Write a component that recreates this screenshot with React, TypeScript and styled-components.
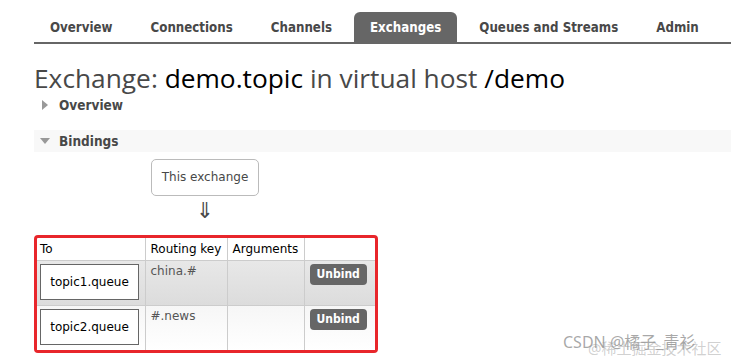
import React from 'react'
import styled, { createGlobalStyle } from 'styled-components'

const GlobalStyle = createGlobalStyle`
  html, body {
    margin: 0;
    padding: 0;
    background: #fff;
  }
  body {
    font-family: "DejaVu Sans", Verdana, sans-serif;
    font-size: 12px;
    color: #484848;
  }
`;

const tabs = ['Overview', 'Connections', 'Channels', 'Exchanges', 'Queues and Streams', 'Admin'];

const bindings = [
  { queue: 'topic1.queue', key: 'china.#', dark: true },
  { queue: 'topic2.queue', key: '#.news', dark: false },
];

const App = () => {
  return (
    <>
      <GlobalStyle />
      <Page>
        <Nav>
          {tabs.map(t => (
            <Tab key={t} $active={t === 'Exchanges'}>{t}</Tab>
          ))}
        </Nav>

        <Title>
          Exchange: <b>demo.topic</b> in virtual host <b>/demo</b>
        </Title>

        <Section>
          <Toggle>
            <Caret $open={false} />
            Overview
          </Toggle>
        </Section>

        <Section>
          <Toggle $bar>
            <Caret $open />
            Bindings
          </Toggle>
          <Diagram>
            <Source>This exchange</Source>
            <Arrow>⇓</Arrow>
          </Diagram>
          <Highlight>
            <Table>
              <thead>
                <tr>
                  <Th $w={108}>To</Th>
                  <Th $w={82}>Routing key</Th>
                  <Th $w={77}>Arguments</Th>
                  <Th $w={71}></Th>
                </tr>
              </thead>
              <tbody>
                {bindings.map(b => (
                  <Row key={b.queue} $dark={b.dark}>
                    <Td><QueueBox>{b.queue}</QueueBox></Td>
                    <Td>{b.key}</Td>
                    <Td></Td>
                    <Td><Unbind>Unbind</Unbind></Td>
                  </Row>
                ))}
              </tbody>
            </Table>
          </Highlight>
        </Section>
        <Watermark>CSDN @橘子_青衫</Watermark>
        <Watermark $second>@稀土掘金技术社区</Watermark>
      </Page>
    </>
  )
}

const Page = styled.div`
  position: relative;
  height: 361px;
  padding: 12px 0 0 34px;
  box-sizing: border-box;
  overflow: hidden;
`;

const Nav = styled.ul`
  display: flex;
  margin: 0;
  padding: 0;
  list-style: none;
  border-bottom: 2px solid #666;
  height: 30px;
`;

const Tab = styled.li<{ $active?: boolean }>`
  display: flex;
  align-items: center;
  padding: 0 16px;
  margin-right: 6px;
  font-family: "DejaVu Sans Condensed", "DejaVu Sans", sans-serif;
  font-stretch: condensed;
  font-weight: bold;
  font-size: 13.2px;
  color: ${p => (p.$active ? '#fff' : '#484848')};
  background: ${p => (p.$active ? '#666' : 'transparent')};
  border-radius: 6px 6px 0 0;
`;

const Title = styled.h1`
  margin: 19px 0 0;
  font-family: "Open Sans", sans-serif;
  font-weight: normal;
  font-size: 26.3px;
  line-height: 31px;
  color: #484848;
  b {
    font-weight: normal;
    color: #000;
  }
`;

const Section = styled.div`
  & + & {
    margin-top: 14px;
  }
`;

const Toggle = styled.div<{ $bar?: boolean }>`
  display: flex;
  align-items: center;
  height: 22px;
  padding-left: 6px;
  font-weight: bold;
  font-size: 13.5px;
  font-family: "DejaVu Sans Condensed", "DejaVu Sans", sans-serif;
  font-stretch: condensed;
  color: #484848;
  background: ${p => (p.$bar ? '#f8f8f8' : 'transparent')};
`;

const Caret = styled.span<{ $open?: boolean }>`
  display: inline-block;
  width: 0;
  height: 0;
  margin-right: 9px;
  ${p =>
    p.$open
      ? `border-left: 5px solid transparent;
         border-right: 5px solid transparent;
         border-top: 6px solid #999;`
      : `border-top: 5px solid transparent;
         border-bottom: 5px solid transparent;
         border-left: 6px solid #999;
         margin-left: 2px;
         margin-right: 11px;`}
`;

const Diagram = styled.div`
  display: flex;
  flex-direction: column;
  align-items: center;
  width: 108px;
  margin: 7px 0 0 117px;
`;

const Source = styled.div`
  border: 1px solid #bbb;
  border-radius: 5px;
  padding: 0 10px;
  height: 35px;
  line-height: 35px;
  white-space: nowrap;
  color: #484848;
`;

const Arrow = styled.div`
  font-size: 22px;
  line-height: 29px;
  color: #484848;
`;

const Highlight = styled.div`
  display: inline-block;
  margin-top: 10px;
  border: 3px solid #e8262b;
  border-radius: 4px;
`;

const Table = styled.table`
  border-collapse: collapse;
  table-layout: fixed;
`;

const Th = styled.th<{ $w: number }>`
  width: ${p => p.$w}px;
  height: 22px;
  padding: 0 5px;
  box-sizing: border-box;
  text-align: left;
  font-weight: normal;
  color: #000;
  border: 1px solid #ccc;
  border-top: none;
  &:first-child { border-left: none; padding-left: 3px; }
  &:last-child { border-right: none; }
`;

const Row = styled.tr<{ $dark?: boolean }>`
  height: 45px;
  background: ${p =>
    p.$dark
      ? 'linear-gradient(#e8e8e8, #dcdcdc)'
      : 'linear-gradient(#f6f6f6, #ffffff)'};
  &:last-child td { border-bottom: none; }
`;

const Td = styled.td`
  vertical-align: top;
  padding: 3px 5px;
  border: 1px solid #ccc;
  color: #555;
  &:first-child { border-left: none; padding-left: 3px; }
  &:last-child { border-right: none; }
`;

const QueueBox = styled.div`
  width: 99px;
  height: 36px;
  box-sizing: border-box;
  border: 1px solid #666;
  background: #fff;
  display: flex;
  align-items: center;
  justify-content: center;
  color: #000;
`;

const Unbind = styled.button`
  display: block;
  height: 21px;
  padding: 0 7px;
  border: none;
  border-radius: 4px;
  background: #666;
  color: #fff;
  font-family: "DejaVu Sans Condensed", "DejaVu Sans", sans-serif;
  font-stretch: condensed;
  font-weight: bold;
  font-size: 12px;
`;

const Watermark = styled.div<{ $second?: boolean }>`
  position: absolute;
  left: ${p => (p.$second ? '588px' : '563px')};
  top: ${p => (p.$second ? '338px' : '332px')};
  font-family: "Noto Sans", "Noto Sans CJK SC", sans-serif;
  font-size: ${p => (p.$second ? '15px' : '16px')};
  line-height: 20px;
  white-space: nowrap;
  color: ${p => (p.$second ? 'rgba(150,150,150,0.45)' : 'rgba(110,110,110,0.6)')};
`;

export default App
